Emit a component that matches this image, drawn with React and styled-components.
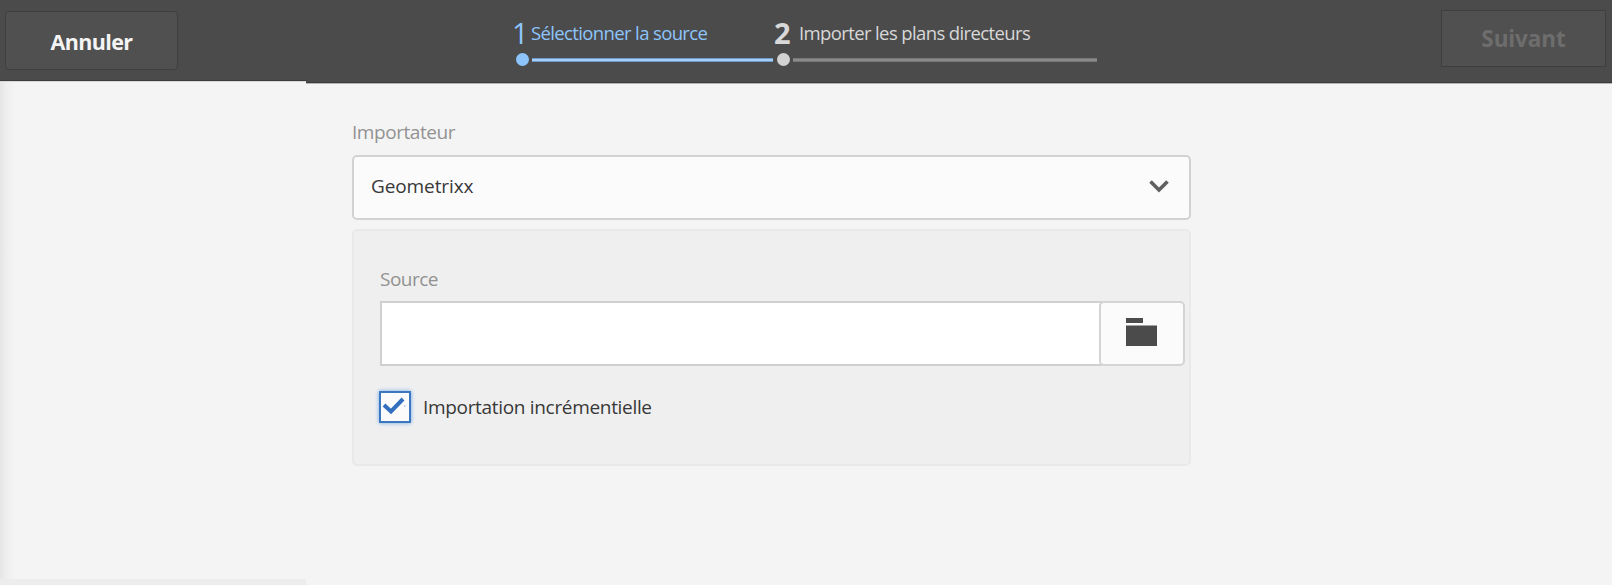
import React from "react";
import styled, { createGlobalStyle } from "styled-components";

const GlobalStyle = createGlobalStyle`
  *, *::before, *::after { box-sizing: border-box; }
  body {
    margin: 0;
    background: #f4f4f4;
    color: #383838;
    font-family: "Open Sans", "Noto Sans", sans-serif;
    font-size: 19px;
    overflow: hidden;
  }
`;

const Page = styled.div`
  display: grid;
  grid-template-columns: 306px 1fr;
  height: 585px;
`;

const Column = styled.div`
  display: flex;
  flex-direction: column;
  min-width: 0;
`;

const Bar = styled.header`
  display: flex;
  align-items: flex-start;
  flex: none;
  height: ${(p) => p.$height}px;
  padding: ${(p) => p.$padding};
  background: #4b4b4b;
  border-bottom: 1px solid #3c3c3c;
`;

const SideBody = styled.div`
  flex: 1;
  border-top: 1px solid #d8d8d8;
  background: linear-gradient(90deg, #e5e5e5 0, #eeeeee 6px, #f4f4f4 16px);
`;

const SideFooter = styled.div`
  flex: none;
  height: 6px;
  background: #ededed;
`;

const Caption = styled.span`
  display: inline-block;
  line-height: 24px;
  white-space: nowrap;
  font-size: ${(p) => p.$size || 19}px;
  letter-spacing: ${(p) => p.$spacing || 0}px;
  color: ${(p) => p.$color || "inherit"};
`;

const BarButton = styled.button`
  display: flex;
  align-items: center;
  justify-content: center;
  width: ${(p) => p.$width}px;
  height: ${(p) => p.$height}px;
  padding: 2px 0 0;
  border: 1px solid #3f3f3f;
  border-radius: ${(p) => p.$radius}px;
  background: #505050;
  color: ${(p) => p.$color};
  font-family: inherit;
  font-weight: 700;
`;

const NextButton = styled(BarButton)`
  margin-left: auto;
  padding: 0;
`;

const Steps = styled.ol`
  display: flex;
  margin: 0;
  padding: 6px 0 0;
  list-style: none;
`;

const Step = styled.li`
  display: flex;
  flex-direction: column;
  width: ${(p) => p.$width}px;
  color: ${(p) => p.$color};
`;

const StepHeading = styled.div`
  display: flex;
  align-items: center;
  height: 33px;
`;

const StepNumber = styled.span`
  width: 18px;
  margin-right: ${(p) => p.$gap}px;
  padding-left: ${(p) => p.$indent || 0}px;
  font-size: 29px;
  font-weight: ${(p) => p.$weight};
  line-height: 33px;
`;

const StepTrack = styled.div`
  display: flex;
  align-items: center;
  gap: 3px;
  height: 13px;
  margin-top: 4px;
  padding-left: 4px;
`;

const StepDot = styled.span`
  flex: none;
  width: 13px;
  height: 13px;
  border-radius: 50%;
  background: ${(p) => p.$color};
`;

const StepLine = styled.span`
  flex: 1;
  height: 4px;
  background: ${(p) => p.$color};
  border: solid ${(p) => p.$edge};
  border-width: 1px 0;
`;

const Workspace = styled.main`
  flex: 1;
  padding-left: 46px;
  border-top: 1px solid #b4b4b4;
`;

const Form = styled.form`
  display: flex;
  flex-direction: column;
  width: 839px;
  padding-top: 36px;
`;

const Select = styled.button`
  display: flex;
  align-items: center;
  justify-content: space-between;
  height: 65px;
  margin: 11px 0 9px;
  padding: 0 20px 3px 17px;
  border: 2px solid #d2d2d2;
  border-radius: 5px;
  background: #fbfbfb;
  color: inherit;
  font-family: inherit;
`;

const Panel = styled.section`
  height: 237px;
  padding: 35px 4px 0 26px;
  border: 2px solid #e9e9e9;
  border-radius: 5px;
  background: #efefef;
`;

const PathField = styled.div`
  display: flex;
  height: 65px;
  margin: 9px 0 25px;
`;

const PathInput = styled.input`
  flex: 1;
  min-width: 0;
  border: 2px solid #d0d0d0;
  border-right: 0;
  background: #fff;
  outline: 0;
`;

const BrowseButton = styled.button`
  display: flex;
  align-items: center;
  justify-content: center;
  width: 86px;
  margin-left: -3px;
  padding: 0 2px 3px 0;
  border: 2px solid #d4d4d4;
  border-radius: 5px;
  background: #fbfbfb;
`;

const CheckRow = styled.label`
  display: flex;
  align-items: center;
  gap: 12px;
  margin-left: -1px;
`;

const CheckBox = styled.span`
  display: flex;
  width: 32px;
  height: 32px;
  border: 2px solid #3c78bd;
  background: #fbfbfb;
  box-shadow: 0 0 4px #6fa5e8;
`;

export default function App() {
  return (
    <>
      <GlobalStyle />
      <Page>
        <Column>
          <Bar $height={81} $padding="11px 0 0 5px">
            <BarButton $width={173} $height={59} $radius={4} $color="#f4f4f4">
              <Caption $size={21.5} $spacing={-0.6}>Annuler</Caption>
            </BarButton>
          </Bar>
          <SideBody />
          <SideFooter />
        </Column>
        <Column>
          <Bar $height={83} $padding="10px 6px 0 206px">
            <Steps>
              <Step $width={261} $color="#8dc5fb">
                <StepHeading>
                  <StepNumber $gap={1} $indent={-1} $weight={500}>1</StepNumber>
                  <Caption $size={18.5} $spacing={-0.63}>Sélectionner la source</Caption>
                </StepHeading>
                <StepTrack>
                  <StepDot $color="#8dc5fb" />
                  <StepLine $color="#a9cef5" $edge="#6d9bcb" />
                </StepTrack>
              </Step>
              <Step $width={324} $color="#d8d8d8">
                <StepHeading>
                  <StepNumber $gap={8} $indent={1} $weight={700}>2</StepNumber>
                  <Caption $size={18.5} $spacing={-0.62}>Importer les plans directeurs</Caption>
                </StepHeading>
                <StepTrack>
                  <StepDot $color="#d2d2d2" />
                  <StepLine $color="#8a8a8a" $edge="#777777" />
                </StepTrack>
              </Step>
            </Steps>
            <NextButton disabled $width={165} $height={57} $radius={0} $color="#6d6d6d">
              <Caption $size={22.5} $spacing={-0.1}>Suivant</Caption>
            </NextButton>
          </Bar>
          <Workspace>
            <Form>
              <Caption $color="#929292" $spacing={-0.45}>Importateur</Caption>
              <Select type="button">
                <Caption $spacing={-0.1}>Geometrixx</Caption>
                <svg width="20" height="13" viewBox="0 0 20 13" fill="none">
                  <path d="M1.5 1.5 10 10 18.5 1.5" stroke="#606060" strokeWidth="3.6" />
                </svg>
              </Select>
              <Panel>
                <Caption $color="#929292" $spacing={-0.5}>Source</Caption>
                <PathField>
                  <PathInput aria-label="Source" />
                  <BrowseButton type="button" aria-label="Parcourir">
                    <svg width="31" height="28" viewBox="0 0 31 28" fill="#4b4b4b">
                      <rect width="17" height="5" />
                      <rect y="7.5" width="31" height="20.5" />
                    </svg>
                  </BrowseButton>
                </PathField>
                <CheckRow>
                  <CheckBox>
                    <svg width="28" height="28" viewBox="0 0 28 28" fill="none">
                      <path d="M3 12 10 18.5 22 6" stroke="#326fc0" strokeWidth="4" />
                      <circle cx="23.7" cy="13" r="0.8" fill="#8fb4e0" />
                    </svg>
                  </CheckBox>
                  <Caption $spacing={-0.32}>Importation incrémentielle</Caption>
                </CheckRow>
              </Panel>
            </Form>
          </Workspace>
        </Column>
      </Page>
    </>
  );
}
